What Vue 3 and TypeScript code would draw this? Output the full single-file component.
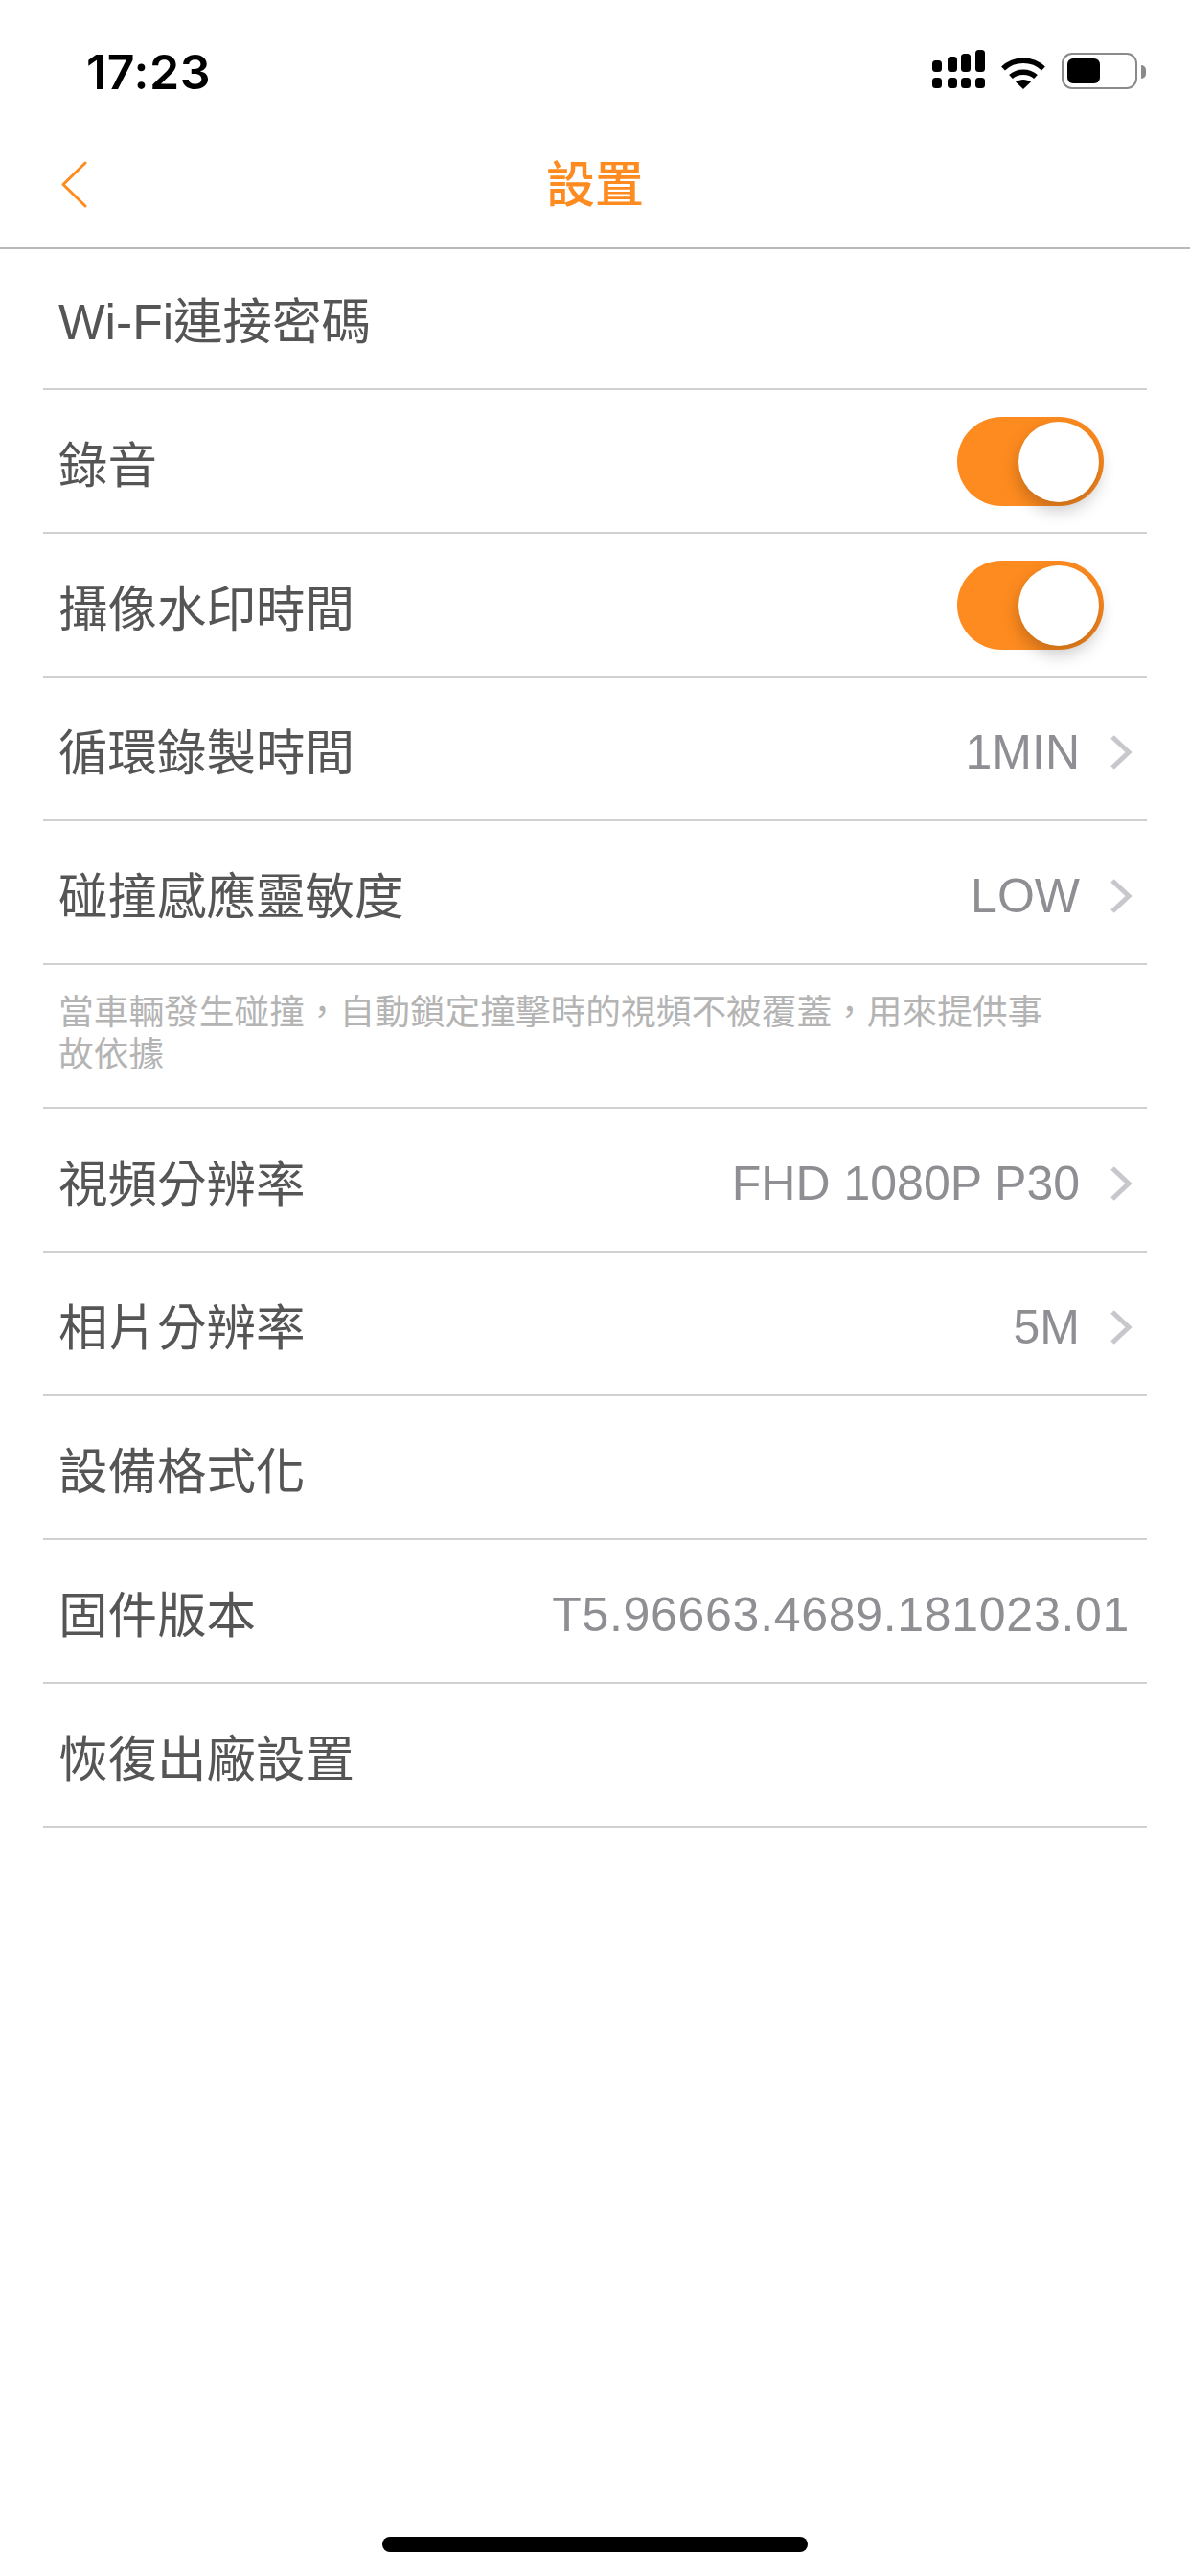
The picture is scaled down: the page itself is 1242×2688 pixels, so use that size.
<script setup lang="ts">
interface Row {
  label: string;
  value?: string;
  arrow?: boolean;
  toggle?: boolean;
  note?: boolean;
}

const rows: Row[] = [
  { label: 'Wi-Fi連接密碼' },
  { label: '錄音', toggle: true },
  { label: '攝像水印時間', toggle: true },
  { label: '循環錄製時間', value: '1MIN', arrow: true },
  { label: '碰撞感應靈敏度', value: 'LOW', arrow: true },
  { label: '當車輛發生碰撞，自動鎖定撞擊時的視頻不被覆蓋，用來提供事故依據', note: true },
  { label: '視頻分辨率', value: 'FHD 1080P P30', arrow: true },
  { label: '相片分辨率', value: '5M', arrow: true },
  { label: '設備格式化' },
  { label: '固件版本', value: 'T5.96663.4689.181023.01' },
  { label: '恢復出廠設置' },
];
</script>

<template>
  <div class="page">
    <div class="status-bar">
      <span class="time">17:23</span>
      <div class="status-icons">
        <svg width="55" height="41" viewBox="0 0 55 41" fill="#000">
          <rect x="0" y="11" width="10" height="12" rx="3.5" />
          <rect x="16" y="7" width="10" height="16" rx="3.5" />
          <rect x="30" y="4" width="10" height="19" rx="3.5" />
          <rect x="45" y="0" width="10" height="23" rx="3.5" />
          <rect x="0" y="29" width="10" height="11" rx="3.5" />
          <rect x="16" y="29" width="10" height="11" rx="3.5" />
          <rect x="30" y="29" width="10" height="11" rx="3.5" />
          <rect x="45" y="29" width="10" height="11" rx="3.5" />
        </svg>
        <svg class="wifi" width="46" height="34" viewBox="0 0 46 34" fill="none" stroke="#000" stroke-width="5.5">
          <path d="M2 12.5C13.5 1.5 32.5 1.5 44 12.5" />
          <path d="M10 21C17 14.5 29 14.5 36 21" />
          <path d="M23 34L15 26.5C19.5 23 26.5 23 31 26.5Z" fill="#000" stroke="none" />
        </svg>
        <div class="battery">
          <div class="battery-fill"></div>
        </div>
        <div class="battery-nub"></div>
      </div>
    </div>

    <div class="nav">
      <svg class="back" width="27" height="49" viewBox="0 0 27 49" fill="none" stroke="#fe8b1f" stroke-width="3">
        <path d="M25 2L2 24.5L25 47" stroke-linecap="round" stroke-linejoin="round" />
      </svg>
      <span class="title">設置</span>
    </div>

    <div class="list">
      <div v-for="row in rows" :key="row.label" class="row" :class="{ 'note-row': row.note }">
        <span :class="row.note ? 'note' : 'label'">{{ row.label }}</span>
        <div v-if="row.toggle" class="toggle">
          <div class="knob"></div>
        </div>
        <div v-else-if="row.value" class="right">
          <span class="value" :class="{ wide: !row.arrow }">{{ row.value }}</span>
          <svg v-if="row.arrow" class="arrow" width="24" height="38" viewBox="0 0 24 38" fill="none" stroke="#c7c7cc" stroke-width="5">
            <path d="M3 3L20 19L3 35" />
          </svg>
        </div>
      </div>
    </div>

    <div class="home-bar"></div>
  </div>
</template>

<style scoped>
.page {
  width: 1242px;
  height: 2688px;
  display: flex;
  flex-direction: column;
  background: #fff;
  font-family: "Liberation Sans", "Noto Sans CJK TC", sans-serif;
  overflow: hidden;
}

.status-bar {
  height: 132px;
  display: flex;
  justify-content: space-between;
  padding: 46px 46px 0 90px;
  box-sizing: border-box;
}

.time {
  font-family: Inter, sans-serif;
  font-size: 50px;
  font-weight: 600;
  letter-spacing: 0.6px;
  line-height: 58px;
  color: #000;
}

.status-icons {
  display: flex;
  align-items: flex-start;
  padding-top: 6px;
}

.wifi {
  margin: 7px 0 0 17px;
}

.battery {
  width: 79px;
  height: 38px;
  margin: 3px 0 0 17px;
  padding: 4px;
  box-sizing: border-box;
  border: 2px solid #8a8a8a;
  border-radius: 11px;
}

.battery-fill {
  width: 34px;
  height: 26px;
  border-radius: 6px;
  background: #000;
}

.battery-nub {
  width: 5px;
  height: 14px;
  margin: 16px 0 0 4px;
  border-radius: 0 7px 7px 0;
  background: #8a8a8a;
}

.nav {
  position: relative;
  height: 128px;
  display: flex;
  align-items: center;
  justify-content: center;
  border-bottom: 2px solid #b9b9b9;
  box-sizing: border-box;
  padding-bottom: 12px;
}

.back {
  position: absolute;
  left: 64px;
  top: 36px;
}

.title {
  font-size: 51px;
  font-weight: 500;
  color: #fe8b1f;
}

.list {
  margin: 0 45px;
  display: flex;
  flex-direction: column;
}

.row {
  height: 150px;
  box-sizing: border-box;
  display: flex;
  align-items: center;
  justify-content: space-between;
  padding-left: 16px;
  border-bottom: 2px solid #d0d0d0;
}

.row:first-child {
  height: 147px;
}

.label {
  font-size: 51.5px;
  color: #555;
}

.row:first-child .label {
  padding-bottom: 3px;
}

.note-row {
  align-items: flex-start;
  padding-top: 28px;
}

.note {
  width: 1040px;
  font-size: 36.7px;
  line-height: 44px;
  color: #b4b4b4;
}

.right {
  display: flex;
  align-items: center;
  padding: 8px 18px 0 0;
}

.value {
  font-size: 50px;
  color: #8e8e93;
}

.value.wide {
  letter-spacing: 0.7px;
}

.arrow {
  margin: 0 -3px 0 31px;
}

.toggle {
  position: relative;
  width: 153px;
  height: 93px;
  margin-right: 45px;
  border-radius: 47px;
  background: #fe8b1f;
}

.knob {
  position: absolute;
  right: 5px;
  top: 5px;
  width: 84px;
  height: 84px;
  border-radius: 50%;
  background: #fff;
  box-shadow: 0 8px 18px rgba(0, 0, 0, 0.24);
}

.home-bar {
  position: absolute;
  left: 399px;
  top: 2647px;
  width: 444px;
  height: 16px;
  border-radius: 8px;
  background: #000;
}
</style>

<style>
html,
body {
  margin: 0;
  background: #fff;
}
</style>
